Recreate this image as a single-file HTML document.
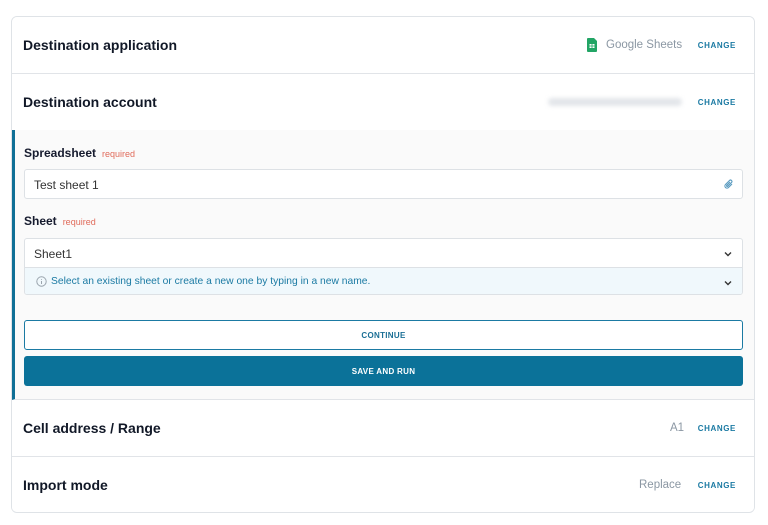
<!DOCTYPE html>
<html><head><style>
*{box-sizing:border-box;margin:0;padding:0}
body{width:768px;height:525px;background:#fff;font-family:"Liberation Sans",sans-serif;position:relative;overflow:hidden}
.card{position:absolute;left:11px;top:16px;width:744px;height:497px;border:1px solid #dfe3e7;border-radius:6px;overflow:hidden}
.row{position:absolute;left:0;width:742px;border-bottom:1px solid #e1e4e8;background:#fff}
.t{position:absolute;left:11px;font-size:14px;font-weight:bold;color:#111827}
.ch{position:absolute;right:18px;font-size:8px;font-weight:bold;color:#1b7aa3;letter-spacing:.6px}
.v{position:absolute;font-size:11.5px;color:#8b97a3}
.exp{position:absolute;left:0;top:113px;width:742px;height:270px;background:#fafafa;border-left:3px solid #0f6f96;border-bottom:1px solid #e1e4e8}
.lab{position:absolute;left:9px;font-size:12px;font-weight:bold;color:#161b2e}
.lab span{font-size:9px;font-weight:normal;color:#e06b5b;margin-left:6px}
.inp{position:absolute;left:9px;width:719px;background:#fff;border:1px solid #dde1e5;border-radius:3px;font-size:12px;color:#333;padding-left:9px}
</style></head><body>
<div class="card">
 <div class="row" style="top:0;height:57px">
  <div class="t" style="top:20px">Destination application</div>
  <svg style="position:absolute;left:575px;top:21px" width="10" height="14" viewBox="0 0 10 14"><path d="M0 1a1 1 0 0 1 1-1h6l3 3v10a1 1 0 0 1-1 1H1a1 1 0 0 1-1-1z" fill="#22a565"/><rect x="2.5" y="6" width="5" height="4" fill="#fff"/><path d="M2.5 8h5M5 6v4" stroke="#22a565" stroke-width=".8"/></svg>
  <div class="v" style="left:594px;top:22px">Google Sheets</div>
  <div class="ch" style="top:24px">CHANGE</div>
 </div>
 <div class="row" style="top:57px;height:57px">
  <div class="t" style="top:20px">Destination account</div>
  <div style="position:absolute;left:536px;top:24px;width:134px;height:8px;background:#e3e6ea;border-radius:4px;filter:blur(2px)"></div>
  <div class="ch" style="top:24px">CHANGE</div>
 </div>
 <div class="exp">
  <div class="lab" style="top:16px">Spreadsheet<span>required</span></div>
  <div class="inp" style="top:39px;height:30px;line-height:31px">Test sheet 1
   <svg style="position:absolute;right:8px;top:9px" width="10" height="11" viewBox="0 0 10 11"><path d="M8 5L4.5 8.5a2 2 0 0 1-3-3L5.5 1.5a1.3 1.3 0 0 1 2 2L3.8 7.2a.6.6 0 0 1-1-1L6 3" fill="none" stroke="#5a9bc0" stroke-width="1.1"/></svg></div>
  <div class="lab" style="top:84px">Sheet<span>required</span></div>
  <div class="inp" style="top:108px;height:57px;padding:0;overflow:hidden">
   <div style="height:29px;line-height:30px;padding-left:9px;border-bottom:1px solid #dde1e5">Sheet1</div>
   <div style="height:28px;line-height:27px;background:#f0f8fc;padding-left:26px;color:#1b7aa3;font-size:10.3px;position:relative">
    <svg style="position:absolute;left:11px;top:8px" width="11" height="11" viewBox="0 0 11 11"><circle cx="5.5" cy="5.5" r="4.7" fill="none" stroke="#9aa4ad"/><path d="M5.5 5v3M5.5 3v.8" stroke="#9aa4ad"/></svg>
    Select an existing sheet or create a new one by typing in a new name.</div>
   <svg style="position:absolute;right:10px;top:12px" width="8" height="6" viewBox="0 0 8 6"><path d="M1 1.5l3 3 3-3" fill="none" stroke="#333" stroke-width="1.4"/></svg>
   <svg style="position:absolute;right:10px;top:41px" width="8" height="6" viewBox="0 0 8 6"><path d="M1 1.5l3 3 3-3" fill="none" stroke="#333" stroke-width="1.4"/></svg>
  </div>
  <div style="position:absolute;left:9px;top:190px;width:719px;height:30px;border:1px solid #1b7aa3;border-radius:3px;background:#fff;text-align:center;line-height:30px;font-size:8px;font-weight:bold;color:#1b6f95;letter-spacing:.3px">CONTINUE</div>
  <div style="position:absolute;left:9px;top:226px;width:719px;height:30px;border-radius:3px;background:#0b7299;text-align:center;line-height:31px;font-size:8px;font-weight:bold;color:#fff;letter-spacing:.3px">SAVE AND RUN</div>
 </div>
 <div class="row" style="top:383px;height:57px">
  <div class="t" style="top:20px">Cell address / Range</div>
  <div class="v" style="left:658px;top:22px">A1</div>
  <div class="ch" style="top:24px">CHANGE</div>
 </div>
 <div class="row" style="top:440px;height:57px;border-bottom:none">
  <div class="t" style="top:20px">Import mode</div>
  <div class="v" style="left:627px;top:22px">Replace</div>
  <div class="ch" style="top:24px">CHANGE</div>
 </div>
</div>
</body></html>
